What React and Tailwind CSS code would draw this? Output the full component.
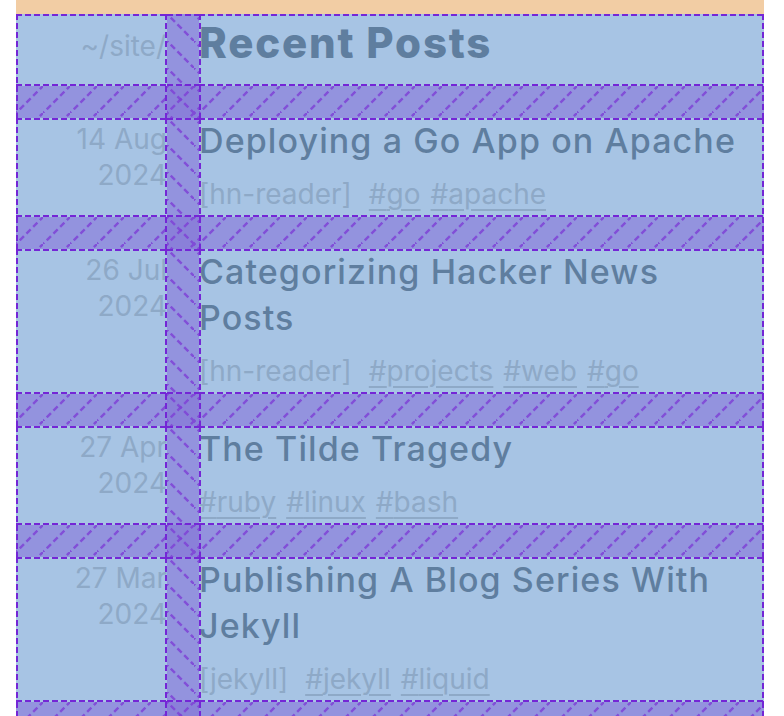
import React from "react";

const H = "bg-[repeating-linear-gradient(90deg,#7426d6_0_6px,transparent_6px_9px)]";
const V = "bg-[repeating-linear-gradient(180deg,#7426d6_0_6px,transparent_6px_9px)]";

const posts = [
  {
    date: ["14 Aug", "2024"],
    title: "Deploying a Go App on Apache",
    series: "hn-reader",
    tags: ["go", "apache"],
  },
  {
    date: ["26 Jul", "2024"],
    title: "Categorizing Hacker News Posts",
    series: "hn-reader",
    tags: ["projects", "web", "go"],
  },
  {
    date: ["27 Apr", "2024"],
    title: "The Tilde Tragedy",
    tags: ["ruby", "linux", "bash"],
  },
  {
    date: ["27 Mar", "2024"],
    title: "Publishing A Blog Series With Jekyll",
    series: "jekyll",
    tags: ["jekyll", "liquid"],
  },
];

// dashed track lines of the grid overlay
const Lines = ({ t, b, l, r }) => (
  <>
    {t && <div className={`pointer-events-none absolute left-0 right-0 top-0 z-10 h-[2px] ${H}`} />}
    {b && <div className={`pointer-events-none absolute left-0 right-0 bottom-0 z-10 h-[2px] ${H}`} />}
    {l && <div className={`pointer-events-none absolute top-0 bottom-0 left-0 z-10 w-[2px] ${V}`} />}
    {r && <div className={`pointer-events-none absolute top-0 bottom-0 right-0 z-10 w-[2px] ${V}`} />}
  </>
);

const Hatch = ({ dir }) => (
  <svg className="pointer-events-none absolute inset-0 h-full w-full">
    <defs>
      <pattern id="hatch-up" width="27" height="27" patternUnits="userSpaceOnUse">
        <path d="M-3 30 L30 -3" stroke="#7d3ed6" strokeWidth="2.5" strokeDasharray="6 3.5" opacity="0.8" />
      </pattern>
      <pattern id="hatch-down" width="27" height="27" patternUnits="userSpaceOnUse">
        <path d="M-3 -3 L30 30" stroke="#7d3ed6" strokeWidth="2.5" strokeDasharray="6 3.5" opacity="0.8" />
      </pattern>
    </defs>
    <rect width="100%" height="100%" fill={dir === "up" ? "url(#hatch-up)" : "url(#hatch-down)"} />
  </svg>
);

const GapRow = () => (
  <div className="flex h-[32px] bg-[#9393de]">
    <div className="relative w-[151px] shrink-0">
      <Hatch dir="up" />
      <Lines l r />
    </div>
    <div className="relative w-[32px] shrink-0 bg-[#8a80d9]">
      <Hatch dir="up" />
      <Hatch dir="down" />
    </div>
    <div className="relative flex-1">
      <Hatch dir="up" />
      <Lines l r />
    </div>
  </div>
);

const Row = ({ left, leftPad, children }) => (
  <div className="flex bg-[#a7c4e4]">
    <div className={`relative w-[151px] shrink-0 text-right text-[28px] leading-[36px] text-[#8ea9c7] ${leftPad}`}>
      {left}
      <Lines t b l r />
    </div>
    <div className="relative w-[32px] shrink-0 bg-[#9393de]">
      <Hatch dir="down" />
      <Lines t b />
    </div>
    <div className="relative min-w-0 flex-1">
      {children}
      <Lines t b l r />
    </div>
  </div>
);

const App = () => {
  return (
    <div className="min-h-screen bg-white pl-4 pr-5 font-['Inter',sans-serif]">
      <div className="h-[14px] bg-[#f2cda4]" />

      <Row left={<span className="pr-[1px]">~/site/</span>} leftPad="pt-[14px]">
        <h1 className="h-[72px] text-[42px] font-extrabold leading-[58px] tracking-[1.8px] text-[#5f7e9f]">
          Recent Posts
        </h1>
      </Row>
      <GapRow />

      {posts.map((post) => (
        <React.Fragment key={post.title}>
          <Row
            leftPad="pt-[3px]"
            left={
              <>
                <div>{post.date[0]}</div>
                <div>{post.date[1]}</div>
              </>
            }>
            <h2 className="mb-2 text-[34px] font-medium leading-[46px] tracking-[1.1px] text-[#5f7e9f]">
              {post.title}
            </h2>
            <div className="flex items-baseline text-[28px] leading-[45px] text-[#8ea9c7]">
              {post.series && <span className="mr-[17px]">[{post.series}]</span>}
              <div className="flex gap-[10px]">
                {post.tags.map((tag) => (
                  <a key={tag} href="#" className="underline decoration-2 underline-offset-[5px]">
                    #{tag}
                  </a>
                ))}
              </div>
            </div>
          </Row>
          <GapRow />
        </React.Fragment>
      ))}
    </div>
  );
};

export default App;
